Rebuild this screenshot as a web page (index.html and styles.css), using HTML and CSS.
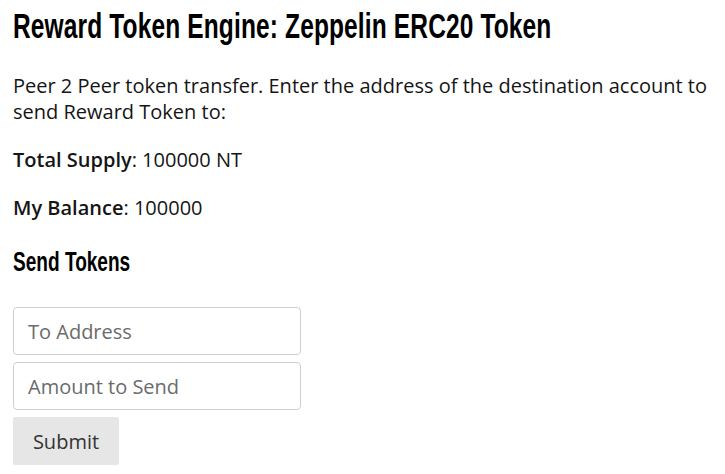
FILE: index.html
```html
<!DOCTYPE html>
<html>
<head>
<meta charset="utf-8">
<link rel="stylesheet" href="styles.css">
</head>
<body>
<main class="page">
  <h1 class="title"><span class="title-text">Reward Token Engine: Zeppelin ERC20 Token</span></h1>
  <p class="intro">Peer 2 Peer token transfer. Enter the address of the destination account to send Reward Token to:</p>
  <p class="stat"><strong>Total Supply</strong>: 100000 NT</p>
  <p class="stat"><strong>My Balance</strong>: 100000</p>
  <h2 class="subtitle"><span class="subtitle-text">Send Tokens</span></h2>
  <form class="send-form">
    <input class="field" type="text" placeholder="To Address">
    <input class="field" type="text" placeholder="Amount to Send">
    <button class="submit" type="button">Submit</button>
  </form>
</main>
</body>
</html>
```

FILE: styles.css
```css
html, body {
  margin: 0;
  padding: 0;
  background: #fff;
  overflow-x: hidden;
}
.page {
  padding: 0 13px;
  font-family: "Open Sans", "Noto Sans", sans-serif;
  font-size: 20px;
  line-height: 26px;
  color: #151515;
}
.title {
  font-family: "Liberation Sans", Arial, sans-serif;
  font-weight: bold;
  font-size: 35px;
  line-height: 40px;
  margin: 6px 0 27px 0;
  color: #000;
  white-space: nowrap;
  overflow: hidden;
}
.title-text {
  display: inline-block;
  transform: scaleX(0.70);
  transform-origin: left center;
  letter-spacing: 0.2px;
}
.intro {
  margin: 0 0 22px 0;
}
.stat {
  margin: 0 0 22px 0;
}
.stat strong {
  font-weight: 600;
}
.subtitle {
  font-family: "Liberation Sans", Arial, sans-serif;
  font-weight: bold;
  font-size: 27px;
  line-height: 32px;
  margin: 25px 0 29px 0;
  color: #000;
  white-space: nowrap;
  overflow: hidden;
}
.subtitle-text {
  display: inline-block;
  transform: scaleX(0.706);
  transform-origin: left center;
}
.send-form {
  display: flex;
  flex-direction: column;
  align-items: flex-start;
  gap: 7px;
}
.field {
  box-sizing: border-box;
  width: 288px;
  height: 48px;
  padding: 0 14px;
  border: 1px solid #cfcfcf;
  border-radius: 4px;
  font-family: "Open Sans", sans-serif;
  font-size: 20px;
  color: #333;
  outline: none;
}
.field::placeholder {
  color: #6b6b6b;
}
.submit {
  box-sizing: border-box;
  height: 48px;
  width: 106px;
  border: none;
  border-radius: 2px;
  background: #e6e6e6;
  font-family: "Open Sans", sans-serif;
  font-size: 20px;
  color: #333;
}
```
